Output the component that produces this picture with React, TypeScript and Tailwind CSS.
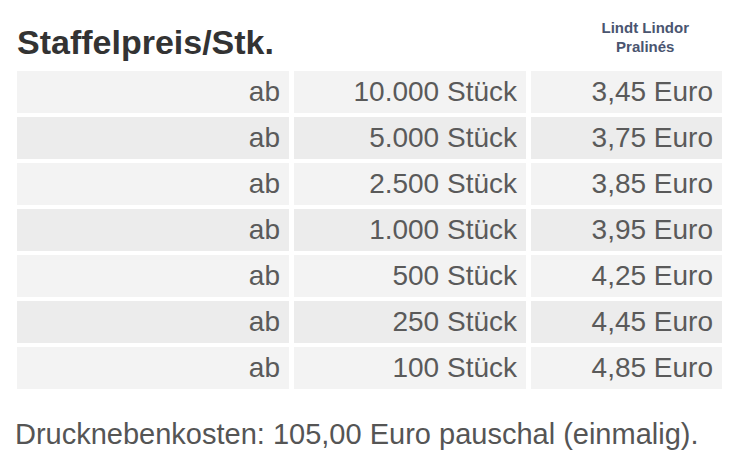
const rows = [
  ["10.000 Stück", "3,45 Euro"],
  ["5.000 Stück", "3,75 Euro"],
  ["2.500 Stück", "3,85 Euro"],
  ["1.000 Stück", "3,95 Euro"],
  ["500 Stück", "4,25 Euro"],
  ["250 Stück", "4,45 Euro"],
  ["100 Stück", "4,85 Euro"],
];

export default function App() {
  return (
    <div
      className="w-[730px] h-[459px] bg-white overflow-hidden"
      style={{ fontFamily: '"Liberation Sans", Arial, sans-serif' }}
    >
      {/* header */}
      <div className="flex items-end h-[71px] pl-[17px]">
        <h1 className="text-[34px] leading-none font-bold text-[#333] pb-[12px]">
          Staffelpreis/Stk.
        </h1>
        <div className="ml-auto mr-[41px] self-start pt-[18px] text-center text-[15px] leading-[19px] font-bold text-[#4a5570]">
          Lindt Lindor
          <br />
          Pralinés
        </div>
      </div>

      {/* price table */}
      <div className="ml-[17px] grid grid-cols-[272px_232px_191px] gap-x-[5px] gap-y-[4px]">
        {rows.map(([qty, price], i) => {
          const bg = i % 2 === 0 ? "bg-[#f3f3f3]" : "bg-[#ececec]";
          return [
            <div key={`a${i}`} className={`${bg} h-[42px] flex items-center justify-end pr-[9px] text-[28px] text-[#5a5a5a]`}>
              ab
            </div>,
            <div key={`q${i}`} className={`${bg} h-[42px] flex items-center justify-end pr-[9px] text-[28px] text-[#5a5a5a]`}>
              {qty}
            </div>,
            <div key={`p${i}`} className={`${bg} h-[42px] flex items-center justify-end pr-[9px] text-[28px] text-[#5a5a5a]`}>
              {price}
            </div>,
          ];
        })}
      </div>

      <p className="mt-[31px] pl-[15px] text-[29px] leading-none text-[#555]">
        Drucknebenkosten: 105,00 Euro pauschal (einmalig).
      </p>
    </div>
  );
}
